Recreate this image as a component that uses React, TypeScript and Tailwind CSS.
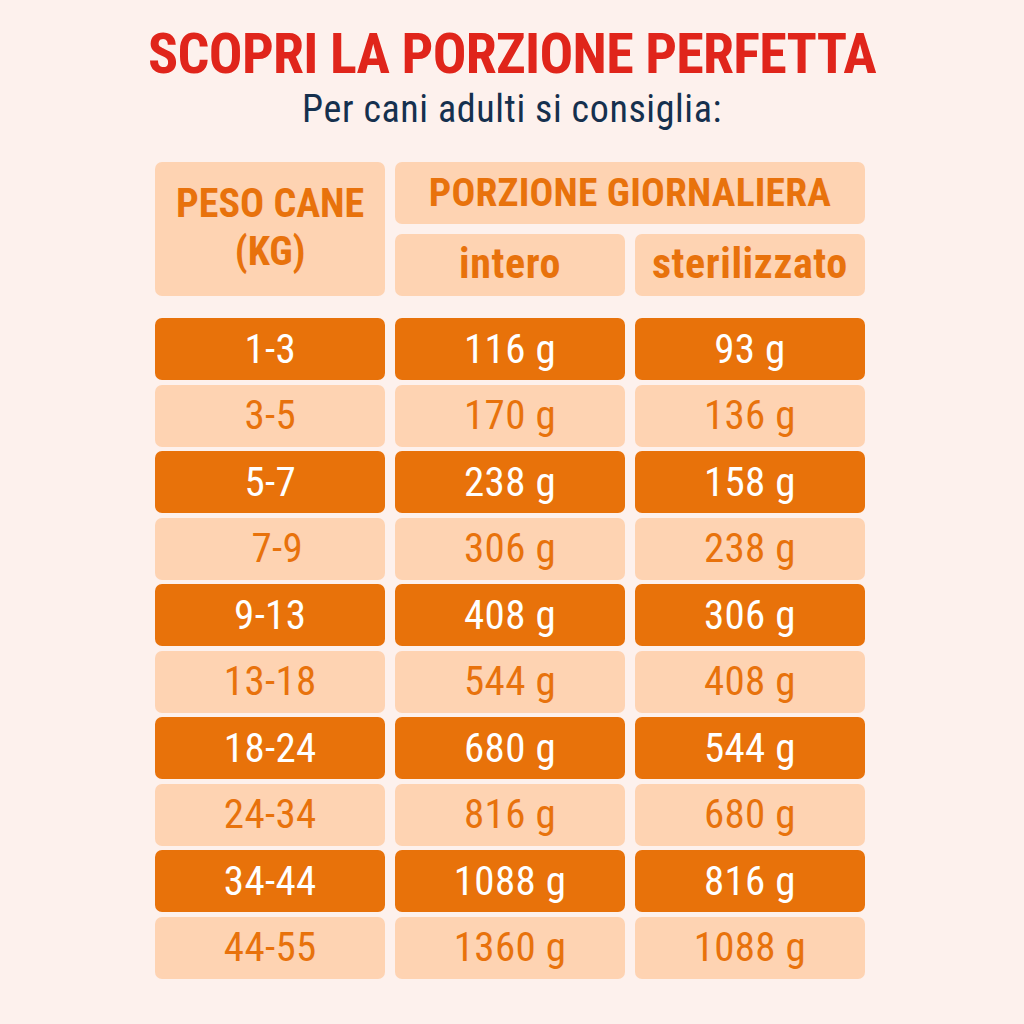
const rows: [string, string, string][] = [
  ['1-3', '116 g', '93 g'],
  ['3-5', '170 g', '136 g'],
  ['5-7', '238 g', '158 g'],
  ['7-9', '306 g', '238 g'],
  ['9-13', '408 g', '306 g'],
  ['13-18', '544 g', '408 g'],
  ['18-24', '680 g', '544 g'],
  ['24-34', '816 g', '680 g'],
  ['34-44', '1088 g', '816 g'],
  ['44-55', '1360 g', '1088 g'],
];

export default function App() {
  return (
    <div
      className="w-[1024px] h-[1024px] bg-[#fdf1ed] flex flex-col items-center"
      style={{ fontFamily: '"Roboto Condensed", "Liberation Sans", sans-serif' }}
    >
      <h1 className="mt-[26px] text-[56px] leading-none font-bold text-[#e0251b] tracking-[-0.7px]">
        SCOPRI LA PORZIONE PERFETTA
      </h1>
      <p className="mt-[8px] text-[38px] leading-none text-[#15304e] tracking-[0.6px]">Per cani adulti si consiglia:</p>

      <div className="w-[710px] mt-[34px] -ml-[4px]">
        <div className="grid grid-cols-3 grid-rows-[62px_62px] gap-x-[9.5px] gap-y-[10px] text-[#e8720c] font-bold">
          <div className="row-span-2 bg-[#fed3b2] rounded-[7px] flex items-center justify-center text-center text-[40px] leading-[48px] pb-[2px]">
            <div>
              PESO CANE
              <br />
              (KG)
            </div>
          </div>
          <div className="col-span-2 bg-[#fed3b2] rounded-[7px] flex items-center justify-center text-[39.5px] leading-none tracking-[0.2px]">
            PORZIONE GIORNALIERA
          </div>
          <div className="bg-[#fed3b2] rounded-[7px] flex items-center justify-center text-[42px] leading-none tracking-[0.6px] pb-[2px]">
            intero
          </div>
          <div className="bg-[#fed3b2] rounded-[7px] flex items-center justify-center text-[42px] leading-none tracking-[0.6px] pb-[2px]">
            sterilizzato
          </div>
        </div>

        <div className="mt-[22px] flex flex-col gap-[4.55px]">
          {rows.map((r, i) => {
            const dark = i % 2 === 0;
            const cell = dark
              ? 'h-[62px] bg-[#e8720a] text-white rounded-[7px] flex items-center justify-center text-[41px] leading-none tracking-[0.3px]'
              : 'h-[62px] bg-[#fed3b2] text-[#e8720c] rounded-[7px] flex items-center justify-center text-[41px] leading-none tracking-[0.3px]';
            return (
              <div key={i} className="grid grid-cols-3 gap-x-[9.5px]">
                <div className={cell}>
                  <span className={r[0] === '7-9' ? 'ml-[14px]' : ''}>{r[0]}</span>
                </div>
                <div className={cell}>{r[1]}</div>
                <div className={cell}>{r[2]}</div>
              </div>
            );
          })}
        </div>
      </div>
    </div>
  );
}
